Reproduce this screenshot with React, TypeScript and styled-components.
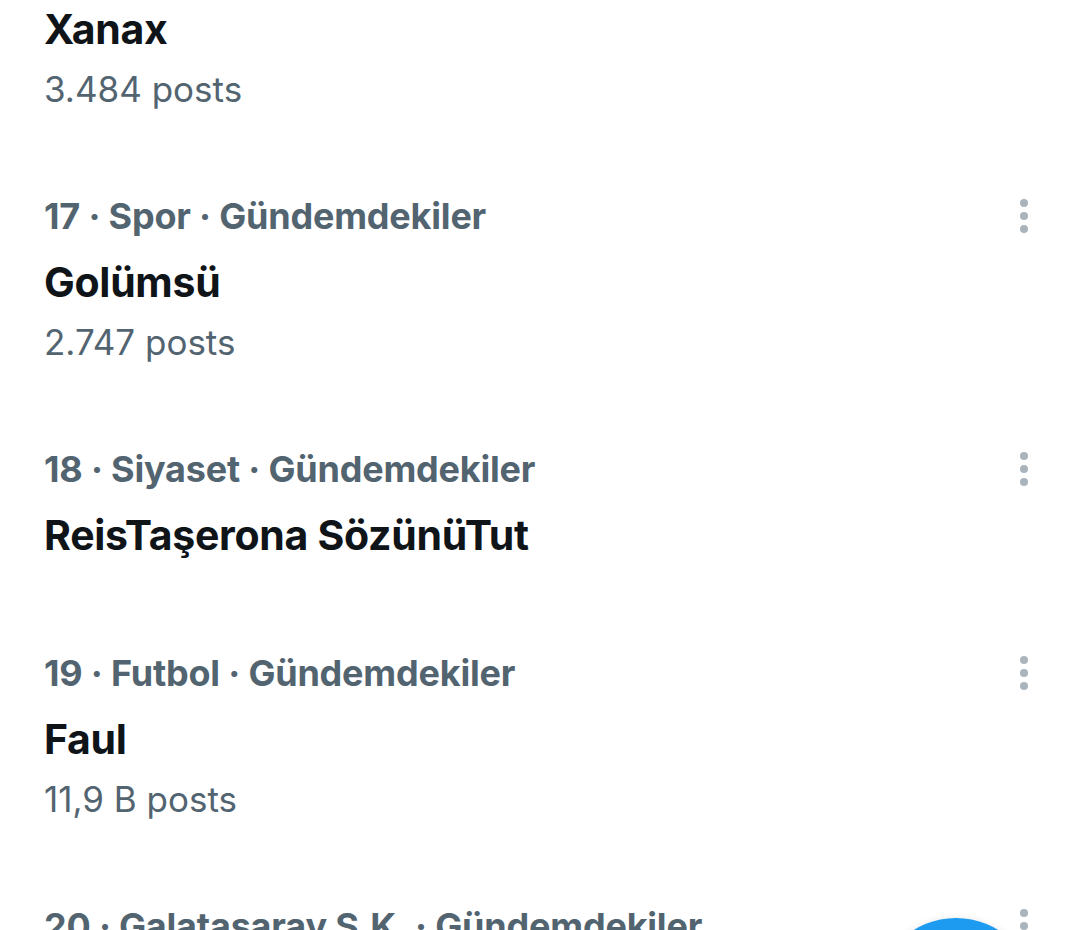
import React from "react";
import styled, { createGlobalStyle } from "styled-components";

const GlobalStyle = createGlobalStyle`
  html, body {
    margin: 0;
    padding: 0;
    background: #ffffff;
  }
  body {
    font-family: Inter, Roboto, "Noto Sans", "Liberation Sans", sans-serif;
    -webkit-font-smoothing: antialiased;
  }
`;

const Page = styled.div`
  position: relative;
  width: 1080px;
  height: 930px;
  overflow: hidden;
  background: #ffffff;
`;

const List = styled.div`
  display: flex;
  flex-direction: column;
`;

const Row = styled.div<{ $cut?: boolean; $noPosts?: boolean }>`
  display: flex;
  align-items: flex-start;
  padding: ${(p) => (p.$cut ? "5px" : "30px")} 36px
    ${(p) => (p.$noPosts ? "60px" : "49px")} 44px;
`;

const Body = styled.div`
  flex: 1;
  display: flex;
  flex-direction: column;
  min-width: 0;
`;

const Meta = styled.div`
  font-size: 36px;
  line-height: 48px;
  font-weight: 700;
  color: #536471;
  white-space: nowrap;
  letter-spacing: -0.2px;
`;

const Title = styled.div<{ $first?: boolean }>`
  margin-top: ${(p) => (p.$first ? "0" : "18px")};
  font-size: 41px;
  line-height: 48px;
  font-weight: 700;
  color: #0f1419;
  white-space: nowrap;
  letter-spacing: -0.3px;
`;

const Posts = styled.div`
  margin-top: 12px;
  font-size: 35px;
  line-height: 48px;
  font-weight: 400;
  color: #536471;
  white-space: nowrap;
`;

const MoreButton = styled.button`
  flex: none;
  width: 40px;
  height: 48px;
  padding: 0;
  border: none;
  background: transparent;
  display: flex;
  align-items: center;
  justify-content: center;
`;

const Fab = styled.div`
  position: absolute;
  left: 876px;
  top: 918px;
  width: 160px;
  height: 160px;
  border-radius: 50%;
  background: #1d9bf0;
  box-shadow: 0 2px 8px rgba(0, 0, 0, 0.15);
`;

const Dots = () => (
  <svg width="12" height="36" viewBox="0 0 12 36" aria-hidden="true">
    <circle cx="6" cy="5" r="4" fill="#aab4bc" />
    <circle cx="6" cy="18" r="4" fill="#aab4bc" />
    <circle cx="6" cy="31" r="4" fill="#aab4bc" />
  </svg>
);

type Trend = {
  meta?: string;
  title: string;
  posts?: string;
};

const trends: Trend[] = [
  { title: "Xanax", posts: "3.484 posts" },
  { meta: "17 · Spor · Gündemdekiler", title: "Golümsü", posts: "2.747 posts" },
  { meta: "18 · Siyaset · Gündemdekiler", title: "ReisTaşerona SözünüTut" },
  { meta: "19 · Futbol · Gündemdekiler", title: "Faul", posts: "11,9 B posts" },
  { meta: "20 · Galatasaray S.K. · Gündemdekiler", title: "Galatasaray", posts: "25,1 B posts" },
];

export default function App() {
  return (
    <Page>
      <GlobalStyle />
      <List>
        {trends.map((t, i) => (
          <Row key={i} $cut={!t.meta} $noPosts={!t.posts}>
            <Body>
              {t.meta && <Meta>{t.meta}</Meta>}
              <Title $first={!t.meta}>{t.title}</Title>
              {t.posts && <Posts>{t.posts}</Posts>}
            </Body>
            {t.meta && (
              <MoreButton aria-label="Daha fazla">
                <Dots />
              </MoreButton>
            )}
          </Row>
        ))}
      </List>
      <Fab />
    </Page>
  );
}
